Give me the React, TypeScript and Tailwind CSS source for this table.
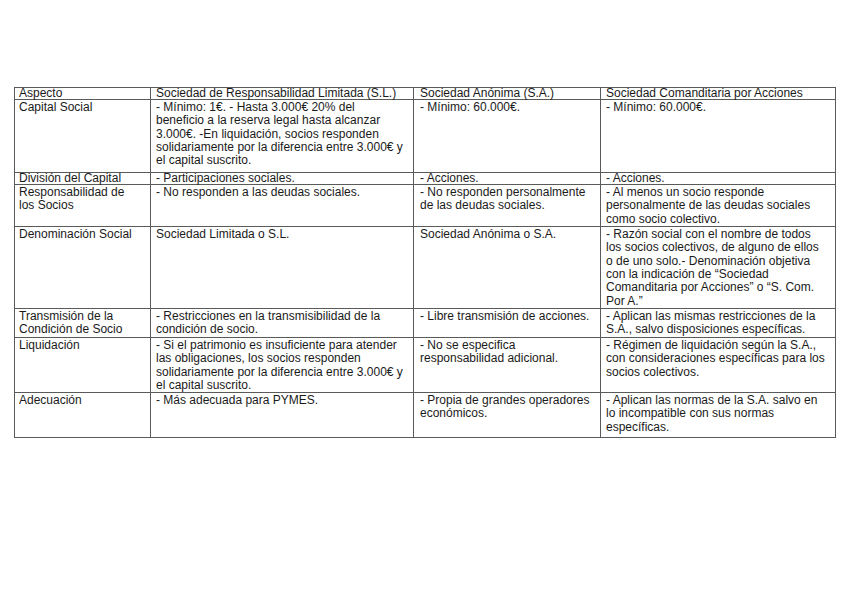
type Cell = string[];

const header: Cell[] = [
  ["Aspecto"],
  ["Sociedad de Responsabilidad Limitada (S.L.)"],
  ["Sociedad Anónima (S.A.)"],
  ["Sociedad Comanditaria por Acciones"],
];

const rows: Cell[][] = [
  [
    ["Capital Social"],
    [
      "- Mínimo: 1€. - Hasta 3.000€ 20% del",
      "beneficio a la reserva legal hasta alcanzar",
      "3.000€. -En liquidación, socios responden",
      "solidariamente por la diferencia entre 3.000€ y",
      "el capital suscrito.",
    ],
    ["- Mínimo: 60.000€."],
    ["- Mínimo: 60.000€."],
  ],
  [
    ["División del Capital"],
    ["- Participaciones sociales."],
    ["- Acciones."],
    ["- Acciones."],
  ],
  [
    ["Responsabilidad de", "los Socios"],
    ["- No responden a las deudas sociales."],
    ["- No responden personalmente", "de las deudas sociales."],
    [
      "- Al menos un socio responde",
      "personalmente de las deudas sociales",
      "como socio colectivo.",
    ],
  ],
  [
    ["Denominación Social"],
    ["Sociedad Limitada o S.L."],
    ["Sociedad Anónima o S.A."],
    [
      "- Razón social con el nombre de todos",
      "los socios colectivos, de alguno de ellos",
      "o de uno solo.- Denominación objetiva",
      "con la indicación de “Sociedad",
      "Comanditaria por Acciones” o “S. Com.",
      "Por A.”",
    ],
  ],
  [
    ["Transmisión de la", "Condición de Socio"],
    ["- Restricciones en la transmisibilidad de la", "condición de socio."],
    ["- Libre transmisión de acciones."],
    ["- Aplican las mismas restricciones de la", "S.A., salvo disposiciones específicas."],
  ],
  [
    ["Liquidación"],
    [
      "- Si el patrimonio es insuficiente para atender",
      "las obligaciones, los socios responden",
      "solidariamente por la diferencia entre 3.000€ y",
      "el capital suscrito.",
    ],
    ["- No se especifica", "responsabilidad adicional."],
    [
      "- Régimen de liquidación según la S.A.,",
      "con consideraciones específicas para los",
      "socios colectivos.",
    ],
  ],
  [
    ["Adecuación"],
    ["- Más adecuada para PYMES."],
    ["- Propia de grandes operadores", "económicos."],
    [
      "- Aplican las normas de la S.A. salvo en",
      "lo incompatible con sus normas",
      "específicas.",
    ],
  ],
];

// padding per column, measured off the reference
const pad = ["pl-[4px]", "pl-[5px]", "pl-[6px]", "pl-[5px]"];

function TableCell({ lines, col, compact }: { lines: Cell; col: number; compact: boolean }) {
  // single-line rows (header, División) are shorter than one text line in the pdf
  const lead = compact ? "leading-[11px]" : "leading-[13.33px] pt-px";
  return (
    <div className={`border-r border-b border-[#5a5a5a] ${pad[col]} ${lead} whitespace-nowrap`}>
      {lines.map((l, i) => (
        <div key={i}>{l}</div>
      ))}
    </div>
  );
}

export default function App() {
  const all = [header, ...rows];
  return (
    <div className="w-[848px] h-[599px] bg-white overflow-hidden pt-[87px] pl-[14px] font-['Liberation_Sans',Arial,sans-serif] text-[12px] text-[#1a1a1a]">
      <div className="grid w-fit grid-cols-[136px_263px_187px_235px] grid-rows-[12px_73px_12px_42px_82px_29px_55px_45px] border-l border-t border-[#5a5a5a]">
        {all.map((row, r) =>
          row.map((cell, c) => (
            <TableCell key={`${r}-${c}`} lines={cell} col={c} compact={r === 0 || r === 2} />
          ))
        )}
      </div>
    </div>
  );
}
